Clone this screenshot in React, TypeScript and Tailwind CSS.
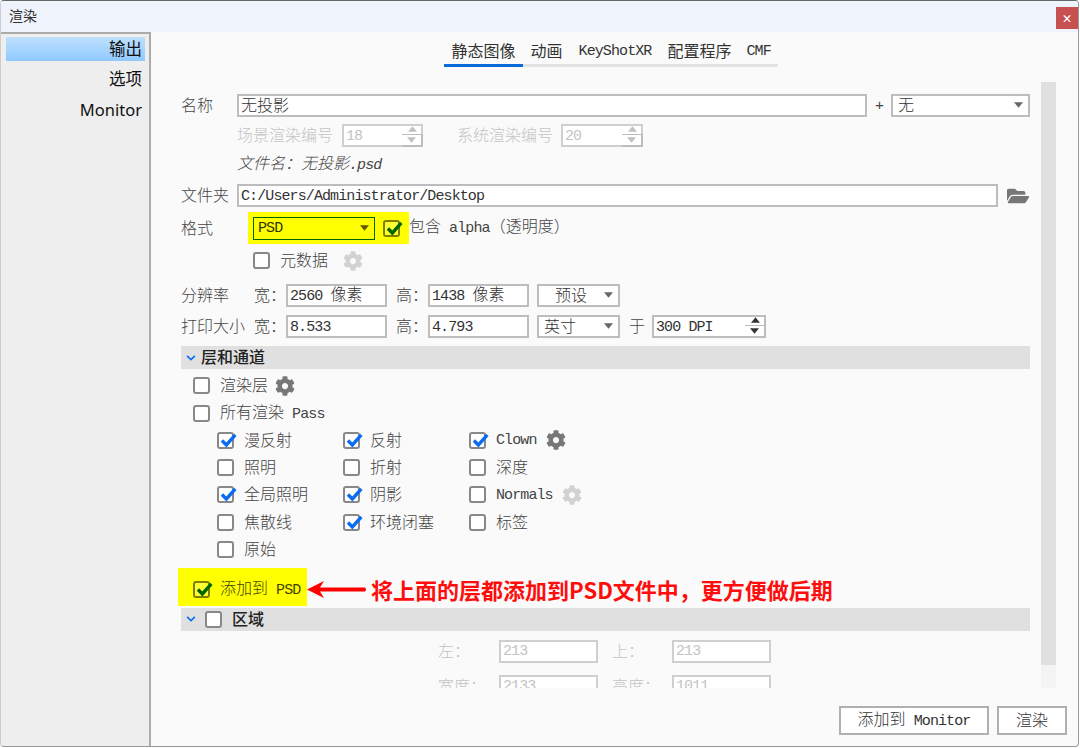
import { FaChevronDown, FaCog, FaFolderOpen } from 'react-icons/fa';

// Latin runs use a tighter mono setting than the CJK text around them
function T({ text }: { text: string }) {
  const parts = text.split(/([\x20-\x7e]+)/);
  return (
    <span>
      {parts.map((p, i) =>
        /^[\x20-\x7e]+$/.test(p) ? (
          <span key={i} className="font-['Liberation_Mono',monospace] whitespace-pre text-[15px] tracking-[-0.9px] font-normal">
            {p}
          </span>
        ) : (
          p
        )
      )}
    </span>
  );
}

function Check({ checked = false, hl = false }: { checked?: boolean; hl?: boolean }) {
  return (
    <div
      className={`relative w-[17px] h-[17px] shrink-0 rounded-[3px] border-2 ${
        hl ? 'border-[#808000] bg-[#ffff33]' : 'border-[#888888] bg-white'
      }`}
    >
      {checked && (
        <svg viewBox="0 0 17 17" className="absolute left-[-1px] top-[-3px] w-[19px] h-[19px]">
          <path
            d="M3.5 8.5 L7.5 12.5 L15.5 3.5"
            fill="none"
            stroke={hl ? '#006600' : '#0a6cf5'}
            strokeWidth="3"
          />
        </svg>
      )}
    </div>
  );
}

function CheckRow({
  label,
  checked,
  gear,
  gearClass = 'ml-[9px]',
  className = '',
}: {
  label: string;
  checked?: boolean;
  gear?: 'on' | 'off';
  gearClass?: string;
  className?: string;
}) {
  return (
    <div className={`flex items-center ${className}`}>
      <Check checked={checked} />
      <span className="ml-[10px] text-[#444444]">
        <T text={label} />
      </span>
      {gear && (
        <FaCog className={`${gearClass} w-[20px] h-[20px] ${gear === 'on' ? 'text-[#777777]' : 'text-[#d2d2d2]'}`} />
      )}
    </div>
  );
}

function Field({
  value,
  className = '',
  disabled = false,
}: {
  value: string;
  className?: string;
  disabled?: boolean;
}) {
  return (
    <div
      className={`h-[23px] flex items-center px-[2px] border-2 bg-white whitespace-nowrap ${
        disabled ? 'border-[#cfcfcf] bg-[#fafafa] text-[#c4c4c4]' : 'border-[#bdbdbd] text-[#333333]'
      } ${className}`}
    >
      <T text={value} />
    </div>
  );
}

function Caret({ className = '' }: { className?: string }) {
  return (
    <svg viewBox="0 0 10 6" className={`w-[9px] h-[6px] ${className}`}>
      <path d="M0 0 H10 L5 6 Z" fill="currentColor" />
    </svg>
  );
}

function Select({ value, className = '', center = false }: { value: string; className?: string; center?: boolean }) {
  return (
    <div className={`relative h-[23px] flex items-center border-2 border-[#bdbdbd] bg-white text-[#333333] ${className}`}>
      <span className={center ? 'ml-[16px]' : 'ml-[5px]'}>{value}</span>
      <Caret className="absolute right-[5px] top-[6px] text-[#666666]" />
    </div>
  );
}

function Spin({
  value,
  className = '',
  disabled = false,
}: {
  value: string;
  className?: string;
  disabled?: boolean;
}) {
  const color = disabled ? 'text-[#c0c0c0]' : 'text-[#333333]';
  return (
    <div
      className={`relative h-[23px] flex items-center px-[2px] border-2 bg-white ${
        disabled ? 'border-[#cfcfcf] bg-[#fafafa] text-[#c4c4c4]' : 'border-[#bdbdbd] text-[#333333]'
      } ${className}`}
    >
      <T text={value} />
      <div className="absolute right-[-2px] top-[-2px] bottom-[-2px] w-[21px] flex flex-col">
        <div className={`flex-1 flex items-center justify-center ${color}`}>
          <Caret className="rotate-180 w-[7px] h-[4px]" />
        </div>
        <div className={`flex-1 flex items-center justify-center border-t border-[#bdbdbd] border-b-2 border-r-2 ${color}`}>
          <Caret className="w-[7px] h-[4px]" />
        </div>
      </div>
    </div>
  );
}

function Section({ className = '', children }: { className?: string; children: React.ReactNode }) {
  return (
    <div className={`h-[23px] flex items-center bg-[#e0e0e0] text-[#222222] font-medium ${className}`}>
      <FaChevronDown className="ml-[5px] w-[10px] h-[10px] text-[#0a6cf5]" />
      {children}
    </div>
  );
}

const passes = [
  { label: '漫反射', checked: true },
  { label: '反射', checked: true },
  { label: 'Clown', checked: true, gear: 'on' as const },
  { label: '照明' },
  { label: '折射' },
  { label: '深度' },
  { label: '全局照明', checked: true },
  { label: '阴影', checked: true },
  { label: 'Normals', gear: 'off' as const },
  { label: '焦散线' },
  { label: '环境闭塞', checked: true },
  { label: '标签' },
  { label: '原始' },
];

const tabs = ['静态图像', '动画', 'KeyShotXR', '配置程序', 'CMF'];

export default function App() {
  return (
    <div className="w-[1080px] h-[748px] overflow-hidden bg-white pr-[1px] pb-[1px] font-['Noto_Sans_CJK_SC','Noto_Sans',sans-serif] text-[16px] leading-none font-light [&_span]:pb-[3px]">
      <div className="h-full flex flex-col border-t border-r border-b border-l border-t-[#666666] border-r-[#999999] border-b-[#999999] border-l-[#cccccc] rounded-[4px] overflow-hidden bg-[#fafafa]">
        {/* title bar */}
        <div className="relative h-[31px] shrink-0 flex items-center bg-[#eff3fb] pl-[8px] text-[14px] font-normal text-[#333333]">
          <span>渲染</span>
          <div className="absolute right-0 top-[6px] w-[22px] h-[22px] bg-[#c75050] flex items-center justify-center text-white text-[11px] font-bold">
            ×
          </div>
        </div>

        <div className="flex-1 flex min-h-0">
          {/* sidebar */}
          <div className="w-[150px] shrink-0 bg-[#eeeeee] border-t-2 border-r-2 border-[#ababab] pt-[3px] pl-[5px] pr-[4px] font-['Noto_Sans','Noto_Sans_CJK_SC',sans-serif] font-normal text-[16.5px] text-[#111111]">
            <div className="h-[24px] flex items-center justify-end pr-[3px] bg-gradient-to-b from-[#bfe0fd] to-[#8fc9ff]">输出</div>
            <div className="h-[36px] flex items-center justify-end pr-[3px]">选项</div>
            <div className="h-[26px] flex items-center justify-end pr-[3px]">Monitor</div>
          </div>

          {/* main */}
          <div className="flex-1 min-w-0 flex flex-col">
            {/* tabs */}
            <div className="h-[35px] shrink-0 flex items-end pl-[293px] text-[#333333] font-normal">
              {tabs.map((tab, i) => (
                <div
                  key={tab}
                  className={`h-[24px] pb-[5px] border-b-[3px] flex items-center ${i === 2 ? 'px-[8.5px]' : 'px-[7.5px]'} ${
                    i === 0 ? 'border-[#0a6cd8]' : 'border-[#e3e3e3]'
                  }`}
                >
                  <T text={tab} />
                </div>
              ))}
            </div>

            {/* form + scrollbar */}
            <div className="mt-[15px] h-[606px] shrink-0 flex pl-[27px]">
              <div className="w-[852px] shrink-0 overflow-hidden pt-[12px] pl-[3px]">
                <div className="flex items-center h-[23px]">
                  <span className="w-[56px] text-[#444444]">名称</span>
                  <Field value="无投影" className="w-[630px]" />
                  <span className="w-[24px] text-center text-[#444444]">
                    <T text="+" />
                  </span>
                  <Select value="无" className="w-[139px]" />
                </div>

                <div className="mt-[7px] flex items-center h-[23px] pl-[56px] text-[#c4c4c4]">
                  <span className="w-[105px]">场景渲染编号</span>
                  <Spin value="18" disabled className="w-[81px]" />
                  <span className="ml-[34px] w-[104px]">系统渲染编号</span>
                  <Spin value="20" disabled className="w-[82px]" />
                </div>

                <div className="mt-[6px] h-[23px] flex items-center pl-[56px] italic text-[#444444]">
                  <T text="文件名：无投影.psd" />
                </div>

                <div className="mt-[8px] flex items-center h-[23px]">
                  <span className="w-[56px] text-[#444444]">文件夹</span>
                  <Field value="C:/Users/Administrator/Desktop" className="w-[761px]" />
                  <FaFolderOpen className="ml-[9px] w-[22px] h-[20px] text-[#777777]" />
                </div>

                <div className="mt-[5px] flex items-center h-[32px]">
                  <span className="w-[67px] text-[#444444]">格式</span>
                  <div className="h-[32px] w-[161px] bg-[#ffff00] flex items-center pl-[5px]">
                    <div className="relative w-[122px] h-[23px] flex items-center border-[1.5px] border-[#006600] text-[#333300] pl-[4px]">
                      <T text="PSD" />
                      <Caret className="absolute right-[5px] top-[7px] text-[#665500]" />
                    </div>
                    <div className="ml-[8px]">
                      <Check checked hl />
                    </div>
                  </div>
                  <span className="text-[#444444]">
                    <T text="包含 alpha（透明度）" />
                  </span>
                </div>

                <CheckRow label="元数据" gear="off" gearClass="ml-[15px]" className="mt-[5px] h-[23px] pl-[72px]" />

                <div className="mt-[12px] flex items-center h-[23px] text-[#444444]">
                  <span className="w-[73px]">分辨率</span>
                  <span className="w-[32px]">宽：</span>
                  <Field value="2560 像素" className="w-[101px]" />
                  <span className="ml-[9px] w-[32px]">高：</span>
                  <Field value="1438 像素" className="w-[101px]" />
                  <Select value="预设" center className="ml-[8px] w-[83px]" />
                </div>

                <div className="mt-[8px] flex items-center h-[23px] text-[#444444]">
                  <span className="w-[73px]">打印大小</span>
                  <span className="w-[32px]">宽：</span>
                  <Field value="8.533" className="w-[101px]" />
                  <span className="ml-[9px] w-[32px]">高：</span>
                  <Field value="4.793" className="w-[101px]" />
                  <Select value="英寸" className="ml-[8px] w-[83px]" />
                  <span className="ml-[9px] w-[23px]">于</span>
                  <Spin value="300 DPI" className="w-[114px]" />
                </div>

                <Section className="mt-[8px]">
                  <span className="ml-[5px]">层和通道</span>
                </Section>

                <CheckRow label="渲染层" gear="on" gearClass="ml-[7px]" className="mt-[5px] h-[23px] pl-[12px]" />
                <CheckRow label="所有渲染 Pass" className="mt-[5px] h-[23px] pl-[12px]" />

                <div className="mt-[1.5px] pl-[36px] grid grid-cols-[126px_126px_1fr] auto-rows-[27.4px]">
                  {passes.map((p) => (
                    <CheckRow key={p.label} label={p.label} checked={p.checked} gear={p.gear} />
                  ))}
                </div>

                <div className="mt-[4.5px] h-[38px] flex items-center">
                  <div className="ml-[-3px] w-[129px] h-full bg-[#ffff00] flex items-center pl-[15px] pt-[6px] text-[#444400]">
                    <Check checked hl />
                    <span className="ml-[10px] whitespace-nowrap">
                      <T text="添加到 PSD" />
                    </span>
                  </div>
                  <svg viewBox="0 0 60 17" className="mt-[6px] w-[60px] h-[17px] shrink-0">
                    <path d="M0 8.5 L17 0 L13 6.5 H58 Q60 8.5 58 10.5 H13 L17 17 Z" fill="#ff0000" />
                  </svg>
                  <div className="ml-[4px] pt-[4px] text-[22px] font-bold text-[#ff0d0d] whitespace-nowrap">
                    将上面的层都添加到PSD文件中，更方便做后期
                  </div>
                </div>

                <Section className="mt-[2px]">
                  <div className="ml-[9px]">
                    <Check />
                  </div>
                  <span className="ml-[10px] font-medium">区域</span>
                </Section>

                <div className="mt-[9px] h-[23px] flex items-center pl-[257px] text-[#c4c4c4]">
                  <span className="w-[61px]">左：</span>
                  <Field value="213" disabled className="w-[99px]" />
                  <span className="ml-[14px] w-[60px]">上：</span>
                  <Field value="213" disabled className="w-[99px]" />
                </div>
                <div className="mt-[12px] h-[23px] flex items-center pl-[257px] text-[#c4c4c4]">
                  <span className="w-[61px]">宽度：</span>
                  <Field value="2133" disabled className="w-[99px]" />
                  <span className="ml-[14px] w-[60px]">高度：</span>
                  <Field value="1011" disabled className="w-[99px]" />
                </div>
              </div>

              {/* scrollbar */}
              <div className="ml-[11px] w-[15px] h-full bg-[#f4f4f4]">
                <div className="h-[583px] bg-[#e0e0e0]" />
              </div>
            </div>

            {/* buttons */}
            <div className="mt-[18px] flex justify-end gap-[8px] pr-[11px] text-[#333333]">
              <div className="w-[150px] h-[29px] border-2 border-[#b0b0b0] bg-white flex items-center justify-center">
                <T text="添加到 Monitor" />
              </div>
              <div className="w-[70px] h-[29px] border-2 border-[#b0b0b0] bg-white flex items-center justify-center">
                <span>渲染</span>
              </div>
            </div>
          </div>
        </div>
      </div>
    </div>
  );
}
